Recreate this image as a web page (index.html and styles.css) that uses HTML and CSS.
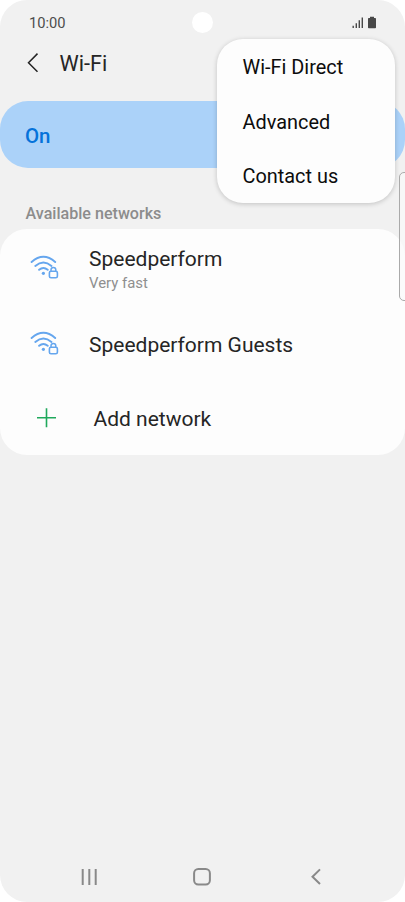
FILE: index.html
```html
<!DOCTYPE html>
<html lang="en">
<head>
<meta charset="utf-8">
<title>Wi-Fi</title>
<link rel="stylesheet" href="styles.css">
</head>
<body>
<svg class="defs" width="0" height="0">
  <symbol id="wifi" viewBox="0 0 30 28">
    <g fill="none" stroke="currentColor" stroke-width="1.9" stroke-linecap="round">
      <path d="M1.6 7Q13.4-3.4 25.2 7M5.3 11Q13.4 4.1 21.5 11M9.1 14.8Q13.4 11 17.7 14.8"/>
      <rect x="19.4" y="16.2" width="8" height="6.6" rx="1.6" stroke-width="1.6"/>
      <path d="M21 16V14.8a2.4 2.4 0 0 1 4.8 0V16" stroke-width="1.5"/>
    </g>
    <circle cx="13.4" cy="18.3" r="1.6" fill="currentColor"/>
  </symbol>
</svg>
<div class="phone">
  <div class="status">
    <span class="time">10:00</span>
    <svg class="status-icons" width="26" height="14" viewBox="0 0 26 14" fill="#484848">
      <path d="M.5 9.8h1.4V12H.5zM3.6 7.2H5V12H3.6zM6.6 4.2H8V12H6.6zM9.6 1.5H11V12H9.6z"/>
      <path d="M18 .8h4v1.1h1.2q.8 0 .8.8v8.7q0 .8-.8.8h-6.4q-.8 0-.8-.8V2.7q0-.8.8-.8H18z"/>
    </svg>
  </div>
  <header class="header">
    <svg width="12" height="20" viewBox="0 0 12 20"><path d="M10.5 .6L1.5 9.7l9 9" fill="none" stroke="#252525" stroke-width="1.5"/></svg>
    <h1>Wi-Fi</h1>
  </header>
  <div class="switch">On</div>
  <h2 class="section">Available networks</h2>
  <main class="card">
    <div class="row first">
      <svg class="wifi" width="30" height="28"><use href="#wifi"/></svg>
      <div><div class="name">Speedperform</div><div class="sub">Very fast</div></div>
    </div>
    <div class="row second">
      <svg class="wifi" width="30" height="28"><use href="#wifi"/></svg>
      <div class="name">Speedperform Guests</div>
    </div>
    <div class="row third">
      <svg class="plus" width="20" height="20" viewBox="0 0 20 20"><path d="M10.5 .3v19M1 9.8h19" stroke="#20a95c" stroke-width="1.6"/></svg>
      <div class="name">Add network</div>
    </div>
  </main>
  <nav class="nav">
    <svg width="16" height="18" viewBox="0 0 16 18"><path d="M1.7 1v16M8.3 1v16M14.7 1v16" stroke="#898989" stroke-width="2"/></svg>
    <svg class="home" width="18" height="18" viewBox="0 0 18 18"><rect x="1.1" y="1" width="15.8" height="15.4" rx="4.2" fill="none" stroke="#898989" stroke-width="2"/></svg>
    <svg width="10" height="18" viewBox="0 0 10 18"><path d="M9 1.4L1.5 8.7 9 16" fill="none" stroke="#898989" stroke-width="2"/></svg>
  </nav>
  <div class="camera"></div>
  <div class="edge-handle"></div>
  <div class="menu">
    <div>Wi-Fi Direct</div>
    <div>Advanced</div>
    <div>Contact us</div>
  </div>
</div>
</body>
</html>
```

FILE: styles.css
```css
* { box-sizing: border-box; }
body { margin: 0; background: #fff; font-family: Roboto, sans-serif; color: #252525; }
h1, h2 { margin: 0; font-weight: 400; }
svg { display: block; flex: none; }
.defs { position: absolute; }
.phone {
  position: relative;
  display: flex;
  flex-direction: column;
  width: 405px;
  height: 902px;
  overflow: hidden;
  background: #f1f1f1;
  border-radius: 27px;
}
.status {
  display: flex;
  align-items: center;
  justify-content: space-between;
  height: 46px;
  padding: 0 27px 0 29px;
}
.time { font-size: 14.7px; color: #4c4c4c; }
.header {
  display: flex;
  align-items: center;
  gap: 20.5px;
  height: 34px;
  padding-left: 27px;
}
.header h1 { font-size: 21.7px; line-height: 34px; padding-top: 2px; }
.switch {
  height: 67px;
  margin-top: 21px;
  padding-left: 25px;
  border-radius: 28px;
  background: #abd2f9;
  color: #0572da;
  font-size: 20.5px;
  font-weight: 500;
  line-height: 70px;
}
.section {
  height: 61px;
  padding: 36px 0 0 25.5px;
  color: #8c8c8c;
  font-size: 16.1px;
  font-weight: 500;
  line-height: 20px;
}
.card { height: 226px; border-radius: 27px; background: #fdfdfd; }
.row { display: flex; }
.first { height: 86px; padding: 16px 0 0 30px; }
.second { height: 66px; padding: 16px 0 0 30px; }
.third { height: 74px; padding: 24px 0 0 36px; }
.wifi { margin: 10px 29px 0 0; color: #65a6ee; }
.second .wifi { margin-top: 0; }
.plus { margin: 3px 37.5px 0 0; }
.name { font-size: 21px; line-height: 28px; white-space: nowrap; }
.sub { margin-top: 1px; color: #8f8f8f; font-size: 14.9px; line-height: 18px; }
.nav {
  display: flex;
  align-items: center;
  justify-content: space-between;
  height: 50px;
  margin-top: auto;
  padding: 0 84px 0 81px;
}
.home { margin-right: 4px; }
.camera {
  position: absolute;
  top: 12px;
  left: 192px;
  width: 21px;
  height: 21px;
  border-radius: 50%;
  background: #fff;
}
.edge-handle {
  position: absolute;
  top: 172px;
  right: -5px;
  width: 11px;
  height: 129px;
  border: 1px solid #aaa;
  border-radius: 5px;
  background: rgba(250, 250, 250, .7);
}
.menu {
  position: absolute;
  top: 39px;
  left: 217px;
  width: 177.5px;
  height: 163.5px;
  padding: 2px 0 0 25.5px;
  border-radius: 26px;
  background: #fdfdfd;
  box-shadow: 0 1px 5px rgba(0, 0, 0, .2);
  color: #0c0c0c;
  font-size: 19.9px;
  line-height: 54.5px;
}
```
